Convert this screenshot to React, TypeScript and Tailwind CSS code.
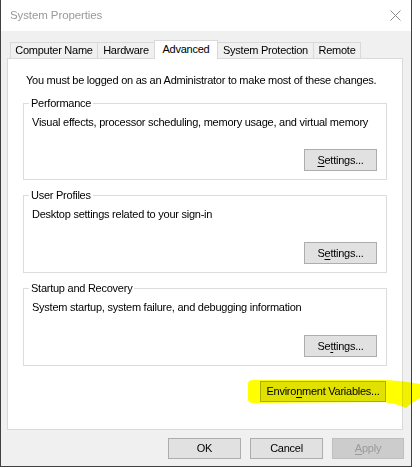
import type { ReactNode } from 'react'

const tabs = [
  { label: 'Computer Name', w: 'w-[88px]' },
  { label: 'Hardware', w: 'w-[58px]' },
  { label: 'Advanced', w: 'w-[64px]', active: true },
  { label: 'System Protection', w: 'w-[97px]' },
  { label: 'Remote', w: 'w-[48px]' },
]

function Button({
  children,
  className = '',
  disabled = false,
}: {
  children: ReactNode
  className?: string
  disabled?: boolean
}) {
  return (
    <div
      className={
        'flex items-center justify-center border ' +
        (disabled
          ? 'border-[#bfbfbf] bg-[#cccccc] text-[#9a9a9a] '
          : 'border-[#adadad] bg-[#e1e1e1] text-black ') +
        className
      }
    >
      {children}
    </div>
  )
}

function Group({
  title,
  desc,
  height,
  settings,
}: {
  title: string
  desc: string
  height: string
  settings: ReactNode
}) {
  return (
    <div className={`relative flex flex-col border border-[#dcdcdc] ${height}`}>
      <span className="absolute -top-[7px] left-[5px] bg-white px-[2px] leading-[13px]">
        {title}
      </span>
      <p className="pl-[8px] pt-[12px] leading-[13px]">{desc}</p>
      <Button className="mt-auto mr-[9px] mb-[8px] h-[22px] w-[73px] self-end">
        {settings}
      </Button>
    </div>
  )
}

export default function App() {
  return (
    <div className="relative h-[468px] w-[420px] bg-white font-['Liberation_Sans',Arial,sans-serif] text-[11px] tracking-[-0.25px] text-black">
      <div className="flex h-[467px] w-[412px] flex-col border-x border-b border-[#404040] bg-[#f0f0f0]">
        {/* title bar */}
        <div className="flex h-[31px] items-center justify-between bg-white pl-[9px] pr-[10px]">
          <span className="text-[11.5px] tracking-[-0.1px] text-[#999999]">System Properties</span>
          <svg width="11" height="11" viewBox="0 0 11 11" className="mb-[1px]">
            <path d="M0.5 0.5 L10.5 10.5 M10.5 0.5 L0.5 10.5" stroke="#8a8a8a" strokeWidth="1" />
          </svg>
        </div>

        {/* tabs */}
        <div className="ml-[9px] mt-[9px] flex h-[18px] items-end">
          {tabs.map((t, i) =>
            t.active ? (
              <div
                key={t.label}
                className={`relative z-10 -mb-px ${i ? '-ml-px' : ''} flex h-[19px] ${t.w} items-center justify-center border border-b-0 border-[#d9d9d9] bg-white pb-[2px]`}
              >
                {t.label}
              </div>
            ) : (
              <div
                key={t.label}
                className={`${i ? '-ml-px' : ''} flex h-[16px] ${t.w} items-center justify-center border border-b-0 border-[#d9d9d9] bg-[#f0f0f0]`}
              >
                {t.label}
              </div>
            )
          )}
        </div>

        {/* panel */}
        <div className="ml-[6px] flex h-[372px] w-[396px] flex-col border border-[#d9d9d9] bg-white px-[15px]">
          <p className="ml-[3px] mt-[15px] leading-[13px]">
            You must be logged on as an Administrator to make most of these changes.
          </p>

          <div className="mt-[16px]">
            <Group
              title="Performance"
              desc="Visual effects, processor scheduling, memory usage, and virtual memory"
              height="h-[77px]"
              settings={
                <>
                  <span className="underline underline-offset-2">S</span>ettings...
                </>
              }
            />
          </div>
          <div className="mt-[15px]">
            <Group
              title="User Profiles"
              desc="Desktop settings related to your sign-in"
              height="h-[78px]"
              settings={
                <>
                  S<span className="underline underline-offset-2">e</span>ttings...
                </>
              }
            />
          </div>
          <div className="mt-[15px]">
            <Group
              title="Startup and Recovery"
              desc="System startup, system failure, and debugging information"
              height="h-[78px]"
              settings={
                <>
                  Se<span className="underline underline-offset-2">t</span>tings...
                </>
              }
            />
          </div>

          <Button className="mt-[15px] mr-[1px] h-[21px] w-[126px] self-end">
            Enviro<span className="underline underline-offset-2">n</span>ment Variables...
          </Button>
        </div>

        {/* dialog buttons */}
        <div className="mt-[8px] flex justify-end gap-[9px] pr-[7px]">
          <Button className="h-[21px] w-[73px]">OK</Button>
          <Button className="h-[21px] w-[73px]">Cancel</Button>
          <Button disabled className="h-[21px] w-[72px]">
            <span className="underline underline-offset-2">A</span>pply
          </Button>
        </div>
      </div>

      {/* highlighter stroke */}
      <svg
        className="pointer-events-none absolute left-0 top-0 mix-blend-multiply"
        width="420"
        height="468"
        viewBox="0 0 420 468"
      >
        <path
          d="M248 384 Q248 380 253 380 L380 380 Q398 380 420 384 L420 398 Q412 402 406 408 Q398 404 384 402 L253 403 Q248 403 248 399 Z"
          fill="#ffff00"
        />
      </svg>
    </div>
  )
}
